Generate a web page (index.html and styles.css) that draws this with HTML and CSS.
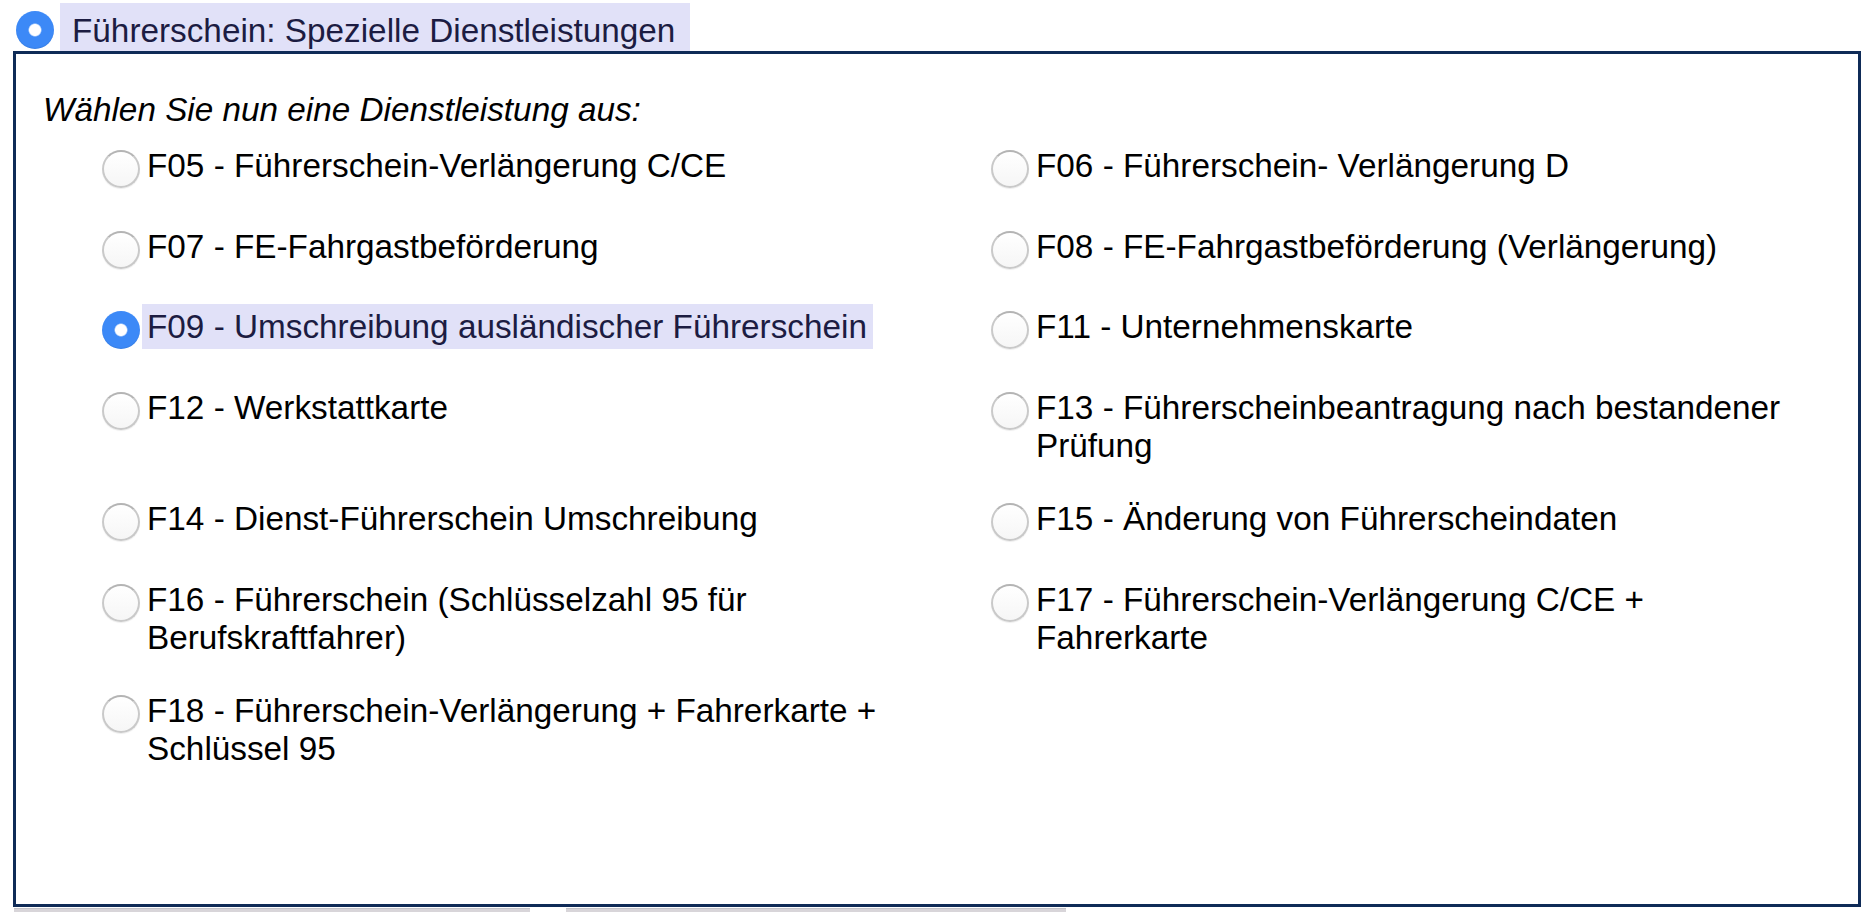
FILE: index.html
```html
<!DOCTYPE html>
<html lang="de">
<head>
<meta charset="utf-8">
<title>Führerschein: Spezielle Dienstleistungen</title>
<link rel="stylesheet" href="styles.css">
</head>
<body>
<div class="group-head">
  <input type="radio" class="radio" name="group" checked>
  <label class="head-label">Führerschein: Spezielle Dienstleistungen</label>
</div>
<div class="panel">
  <p class="prompt">Wählen Sie nun eine Dienstleistung aus:</p>
  <div class="options">
    <div class="option"><input type="radio" class="radio" name="svc"><label class="opt-label">F05 - Führerschein-Verlängerung C/CE</label></div>
    <div class="option"><input type="radio" class="radio" name="svc"><label class="opt-label">F06 - Führerschein- Verlängerung D</label></div>
    <div class="option"><input type="radio" class="radio" name="svc"><label class="opt-label">F07 - FE-Fahrgastbeförderung</label></div>
    <div class="option"><input type="radio" class="radio" name="svc"><label class="opt-label">F08 - FE-Fahrgastbeförderung (Verlängerung)</label></div>
    <div class="option selected"><input type="radio" class="radio" name="svc" checked><label class="opt-label">F09 - Umschreibung ausländischer Führerschein</label></div>
    <div class="option"><input type="radio" class="radio" name="svc"><label class="opt-label">F11 - Unternehmenskarte</label></div>
    <div class="option"><input type="radio" class="radio" name="svc"><label class="opt-label">F12 - Werkstattkarte</label></div>
    <div class="option"><input type="radio" class="radio" name="svc"><label class="opt-label">F13 - Führerscheinbeantragung nach bestandener Prüfung</label></div>
    <div class="option"><input type="radio" class="radio" name="svc"><label class="opt-label">F14 - Dienst-Führerschein Umschreibung</label></div>
    <div class="option"><input type="radio" class="radio" name="svc"><label class="opt-label">F15 - Änderung von Führerscheindaten</label></div>
    <div class="option"><input type="radio" class="radio" name="svc"><label class="opt-label">F16 - Führerschein (Schlüsselzahl 95 für Berufskraftfahrer)</label></div>
    <div class="option"><input type="radio" class="radio" name="svc"><label class="opt-label">F17 - Führerschein-Verlängerung C/CE + Fahrerkarte</label></div>
    <div class="option"><input type="radio" class="radio" name="svc"><label class="opt-label">F18 - Führerschein-Verlängerung + Fahrerkarte + Schlüssel 95</label></div>
  </div>
</div>
<div class="below">
  <div class="tab tab-a"></div>
  <div class="tab tab-b"></div>
</div>
</body>
</html>
```
FILE: styles.css
```css
html, body {
  margin: 0;
  padding: 0;
  overflow: hidden;
  background: #ffffff;
}

body {
  font-family: "Liberation Sans", Arial, sans-serif;
  font-size: 33.3px;
  line-height: 38px;
  color: #000000;
}

.group-head {
  display: flex;
  align-items: flex-start;
  padding: 3px 0 0 16px;
}

.radio {
  -webkit-appearance: none;
  appearance: none;
  box-sizing: border-box;
  flex: none;
  width: 38px;
  height: 38px;
  margin: 0;
  border-radius: 50%;
  border: 2px solid #c9c9c9;
  border-top-color: #b4b4b4;
  background: linear-gradient(#ffffff, #f6f6f6);
  box-shadow: 0 1px 1px rgba(0, 0, 0, 0.08);
}

.radio:checked {
  border: none;
  background: radial-gradient(circle at 50% 50%, #ffffff 0, #ffffff 5.5px, #3c89f7 7px, #3c89f7 100%);
  box-shadow: inset 0 -1px 1px rgba(0, 0, 0, 0.08);
}

.group-head .radio {
  margin: 8px 6px 0 0;
}

.head-label {
  background: #e1e1f8;
  color: #1c1c42;
  padding: 9px 15px 1px 12px;
}

.panel {
  box-sizing: border-box;
  margin-left: 13px;
  width: 1848px;
  height: 856px;
  border: 3px solid #0f2b57;
}

.prompt {
  margin: 37px 0 0 27px;
  font-style: italic;
}

.options {
  display: grid;
  grid-template-columns: 820px 820px;
  column-gap: 69px;
  row-gap: 28.5px;
  align-items: start;
  margin: 14px 0 0 86px;
}

.option {
  display: flex;
  align-items: flex-start;
}

.option .radio {
  margin: 7px 2px 7px 0;
}

.opt-label {
  padding: 4px 6px 3px 5px;
}

.option.selected .opt-label {
  background: #e1e1f8;
  color: #1c1c42;
}

.below {
  display: flex;
  gap: 36px;
  margin: 1px 0 0 14px;
}

.tab {
  height: 30px;
  background: #d8d5d9;
  border-top: 1px solid #c2c2c8;
}

.tab-a {
  width: 516px;
}

.tab-b {
  width: 500px;
}
```
